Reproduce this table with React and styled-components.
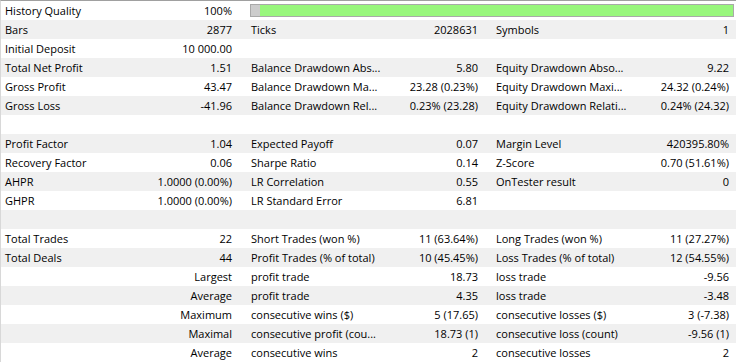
import React from 'react';
import styled, { createGlobalStyle } from 'styled-components';

const rows = [
  ['History Quality', '100%', 'BAR'],
  ['Bars', '2877', 'Ticks', '2028631', 'Symbols', '1'],
  ['Initial Deposit', '10 000.00', '', '', '', ''],
  ['Total Net Profit', '1.51', 'Balance Drawdown Abs...', '5.80', 'Equity Drawdown Abso...', '9.22'],
  ['Gross Profit', '43.47', 'Balance Drawdown Ma...', '23.28 (0.23%)', 'Equity Drawdown Maxi...', '24.32 (0.24%)'],
  ['Gross Loss', '-41.96', 'Balance Drawdown Rel...', '0.23% (23.28)', 'Equity Drawdown Relati...', '0.24% (24.32)'],
  ['', '', '', '', '', ''],
  ['Profit Factor', '1.04', 'Expected Payoff', '0.07', 'Margin Level', '420395.80%'],
  ['Recovery Factor', '0.06', 'Sharpe Ratio', '0.14', 'Z-Score', '0.70 (51.61%)'],
  ['AHPR', '1.0000 (0.00%)', 'LR Correlation', '0.55', 'OnTester result', '0'],
  ['GHPR', '1.0000 (0.00%)', 'LR Standard Error', '6.81', '', ''],
  ['', '', '', '', '', ''],
  ['Total Trades', '22', 'Short Trades (won %)', '11 (63.64%)', 'Long Trades (won %)', '11 (27.27%)'],
  ['Total Deals', '44', 'Profit Trades (% of total)', '10 (45.45%)', 'Loss Trades (% of total)', '12 (54.55%)'],
  ['', 'Largest', 'profit trade', '18.73', 'loss trade', '-9.56'],
  ['', 'Average', 'profit trade', '4.35', 'loss trade', '-3.48'],
  ['', 'Maximum', 'consecutive wins ($)', '5 (17.65)', 'consecutive losses ($)', '3 (-7.38)'],
  ['', 'Maximal', 'consecutive profit (cou...', '18.73 (1)', 'consecutive loss (count)', '-9.56 (1)'],
  ['', 'Average', 'consecutive wins', '2', 'consecutive losses', '2'],
];

const App = () => {
  return (
    <>
      <GlobalStyle />
      <Report>
        {rows.map((row, i) => (
          <Row key={i} $shaded={i % 2 === 1}>
            <Label $first>{row[0]}</Label>
            <Value $first>{row[1]}</Value>
            {row[2] === 'BAR' ? (
              <BarCell>
                <Bar>
                  <BarGray />
                  <BarFill />
                </Bar>
              </BarCell>
            ) : (
              <>
                <Label>{row[2]}</Label>
                <Value>{row[3]}</Value>
                <Label $last>{row[4]}</Label>
                <Value $last>{row[5]}</Value>
              </>
            )}
          </Row>
        ))}
      </Report>
    </>
  );
};

const GlobalStyle = createGlobalStyle`
  body {
    margin: 0;
    background: #ffffff;
    font-family: 'Segoe UI', 'Open Sans', 'Noto Sans', sans-serif;
  }
`;

const Report = styled.div`
  width: 736px;
  height: 362px;
  box-sizing: border-box;
  border-top: 1px solid #a0a0a0;
  border-left: 1px solid #d8d8d8;
  overflow: hidden;
  font-size: 11px;
  color: #000;
`;

const Row = styled.div`
  display: grid;
  grid-template-columns: 125px 115px 148px 98px 146px 103px;
  height: 19px;
  align-items: center;
  background: ${(p) => (p.$shaded ? '#f0f0f0' : '#ffffff')};
`;

const Label = styled.div`
  padding-left: ${(p) => (p.$first ? '4px' : p.$last ? '9px' : '10px')};
  white-space: nowrap;
`;

const Value = styled.div`
  text-align: right;
  padding-right: ${(p) => (p.$last ? '7px' : '9px')};
  white-space: nowrap;
`;

const BarCell = styled.div`
  grid-column: 3 / 7;
  padding: 0 2px 0 9px;
`;

const Bar = styled.div`
  display: flex;
  height: 11px;
  border: 1px solid #a9a9a9;
`;

const BarGray = styled.div`
  width: 9px;
  background: #cccccc;
`;

const BarFill = styled.div`
  flex: 1;
  background: #98f67c;
`;

export default App;
